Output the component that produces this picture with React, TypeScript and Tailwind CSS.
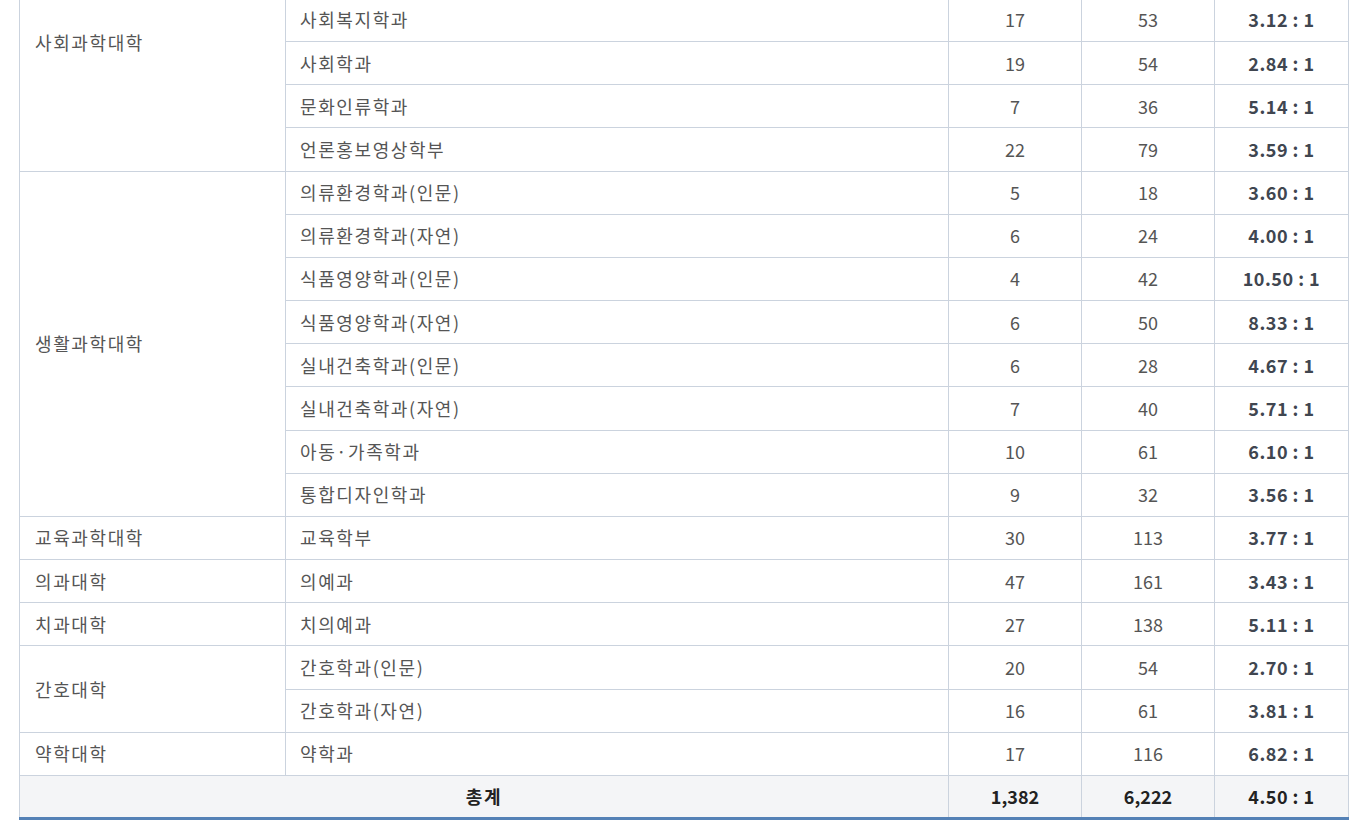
import React from "react";

interface Dept {
  name: string;
  quota: string;
  applicants: string;
  ratio: string;
}

interface College {
  name: string;
  depts: Dept[];
  // 화면 위로 잘린 학과가 있는 단과대는 라벨을 위쪽에 둔다
  clipped?: boolean;
}

const COLLEGES: College[] = [
  {
    name: "사회과학대학",
    clipped: true,
    depts: [
      { name: "사회복지학과", quota: "17", applicants: "53", ratio: "3.12 : 1" },
      { name: "사회학과", quota: "19", applicants: "54", ratio: "2.84 : 1" },
      { name: "문화인류학과", quota: "7", applicants: "36", ratio: "5.14 : 1" },
      { name: "언론홍보영상학부", quota: "22", applicants: "79", ratio: "3.59 : 1" },
    ],
  },
  {
    name: "생활과학대학",
    depts: [
      { name: "의류환경학과(인문)", quota: "5", applicants: "18", ratio: "3.60 : 1" },
      { name: "의류환경학과(자연)", quota: "6", applicants: "24", ratio: "4.00 : 1" },
      { name: "식품영양학과(인문)", quota: "4", applicants: "42", ratio: "10.50 : 1" },
      { name: "식품영양학과(자연)", quota: "6", applicants: "50", ratio: "8.33 : 1" },
      { name: "실내건축학과(인문)", quota: "6", applicants: "28", ratio: "4.67 : 1" },
      { name: "실내건축학과(자연)", quota: "7", applicants: "40", ratio: "5.71 : 1" },
      { name: "아동·가족학과", quota: "10", applicants: "61", ratio: "6.10 : 1" },
      { name: "통합디자인학과", quota: "9", applicants: "32", ratio: "3.56 : 1" },
    ],
  },
  {
    name: "교육과학대학",
    depts: [{ name: "교육학부", quota: "30", applicants: "113", ratio: "3.77 : 1" }],
  },
  {
    name: "의과대학",
    depts: [{ name: "의예과", quota: "47", applicants: "161", ratio: "3.43 : 1" }],
  },
  {
    name: "치과대학",
    depts: [{ name: "치의예과", quota: "27", applicants: "138", ratio: "5.11 : 1" }],
  },
  {
    name: "간호대학",
    depts: [
      { name: "간호학과(인문)", quota: "20", applicants: "54", ratio: "2.70 : 1" },
      { name: "간호학과(자연)", quota: "16", applicants: "61", ratio: "3.81 : 1" },
    ],
  },
  {
    name: "약학대학",
    depts: [{ name: "약학과", quota: "17", applicants: "116", ratio: "6.82 : 1" }],
  },
];

const cell = "border border-[#cbd3de] h-[43.18px] p-0";

export default function App() {
  return (
    <div className="w-[1365px] h-[825px] overflow-hidden bg-white font-['Noto_Sans_CJK_KR','Noto_Sans',sans-serif] text-[18px] text-[#555]">
      <div className="-mt-[2.2px] pl-[19px]">
        <table className="w-[1329px] table-fixed border-collapse border-b-[3px] border-b-[#5481b6]">
          <colgroup>
            <col className="w-[266px]" />
            <col className="w-[663px]" />
            <col className="w-[133px]" />
            <col className="w-[133px]" />
            <col className="w-[134px]" />
          </colgroup>
          <tbody>
            {COLLEGES.map((c) =>
              c.depts.map((d, i) => (
                <tr key={c.name + d.name}>
                  {i === 0 && (
                    <td
                      rowSpan={c.depts.length}
                      className={`${cell} pl-[15px] tracking-[1.6px] ${
                        c.clipped ? "align-top pt-[30px]" : "align-middle"
                      }`}
                    >
                      {c.name}
                    </td>
                  )}
                  <td className={`${cell} align-middle pl-[14px] tracking-[1.6px]`}>{d.name}</td>
                  <td className={`${cell} align-middle text-center`}>{d.quota}</td>
                  <td className={`${cell} align-middle text-center`}>{d.applicants}</td>
                  <td className={`${cell} align-middle text-center font-bold tracking-[0.5px] text-[#404650]`}>
                    {d.ratio}
                  </td>
                </tr>
              ))
            )}
            <tr className="bg-[#f4f5f7] font-bold text-[#222]">
              <td colSpan={2} className={`${cell} align-middle text-center tracking-[1.6px]`}>
                총계
              </td>
              <td className={`${cell} align-middle text-center`}>1,382</td>
              <td className={`${cell} align-middle text-center`}>6,222</td>
              <td className={`${cell} align-middle text-center tracking-[0.5px]`}>4.50 : 1</td>
            </tr>
          </tbody>
        </table>
      </div>
    </div>
  );
}
